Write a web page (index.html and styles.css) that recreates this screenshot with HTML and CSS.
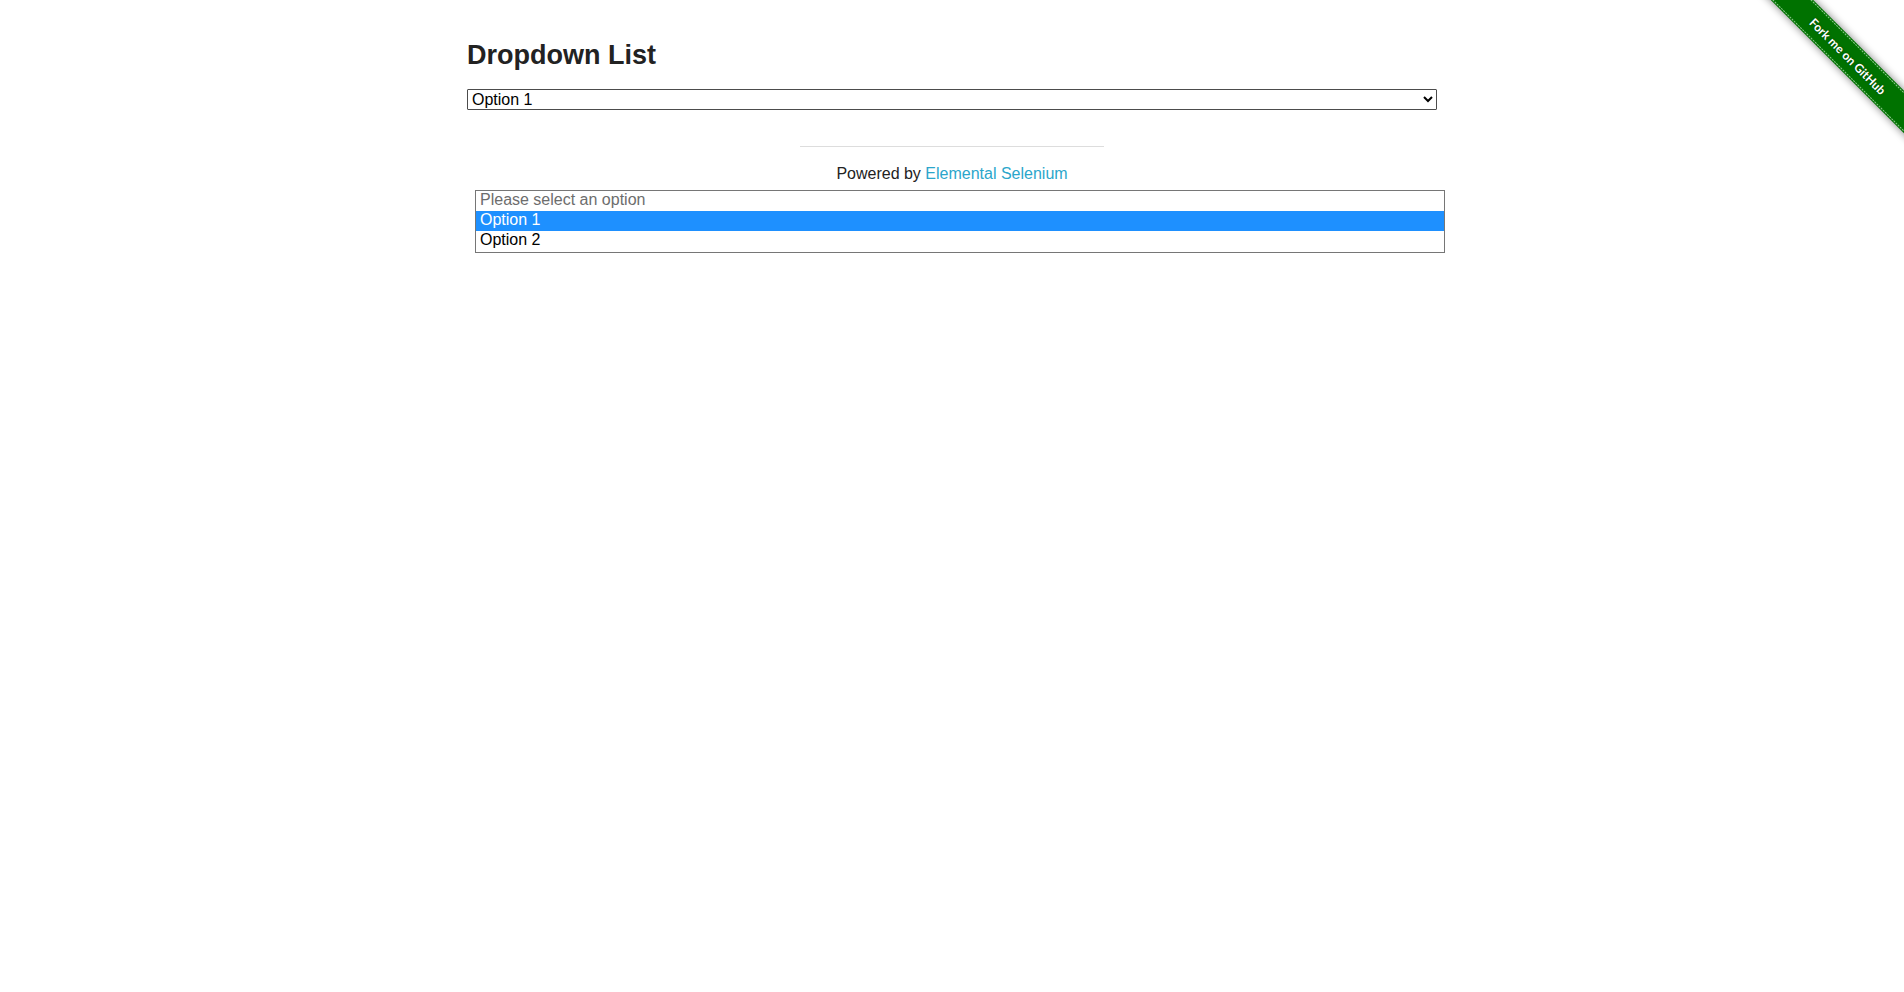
FILE: index.html
```html
<!DOCTYPE html>
<html lang="en">
<head>
<meta charset="utf-8">
<title>Dropdown List</title>
<link rel="stylesheet" href="styles.css">
</head>
<body>
<a class="ribbon" href="#" aria-label="Fork me on GitHub">
  <svg width="149" height="149" viewBox="0 0 149 149">
    <defs>
      <filter id="shadow" x="-20%" y="-50%" width="140%" height="200%"><feGaussianBlur stdDeviation="4"/></filter>
    </defs>
    <g transform="translate(93 56) rotate(45)">
      <rect class="ribbon-shadow" x="-120" y="-15" width="240" height="30" filter="url(#shadow)"/>
      <rect class="ribbon-band" x="-120" y="-15" width="240" height="30"/>
      <path class="ribbon-stitch" d="M-120 -13.5H120M-120 13.5H120"/>
      <text class="ribbon-text" x="0" y="5" text-anchor="middle">Fork me on GitHub</text>
    </g>
  </svg>
</a>
<main class="content">
  <h3 class="title"><label for="dropdown">Dropdown List</label></h3>
  <select id="dropdown" class="dropdown">
    <option disabled>Please select an option</option>
    <option selected>Option 1</option>
    <option>Option 2</option>
  </select>
</main>
<footer class="footer">
  <hr class="rule">
  <div class="powered">Powered by <a class="link" href="#">Elemental Selenium</a></div>
</footer>
<div class="popup">
  <select class="menu" size="3" aria-label="Dropdown options">
    <option disabled>Please select an option</option>
    <option selected>Option 1</option>
    <option>Option 2</option>
  </select>
</div>
</body>
</html>
```
FILE: styles.css
```css
* {
  box-sizing: border-box;
}

body {
  min-height: 100vh;
  margin: 0;
  background: #fff;
  color: #222;
  font: 16px/24px "Liberation Sans", Arial, sans-serif;
}

.ribbon {
  position: absolute;
  top: 0;
  right: 0;
  height: 149px;
  overflow: hidden;
}

.ribbon-shadow {
  fill: #000;
  opacity: 0.5;
}

.ribbon-band {
  fill: #007200;
}

.ribbon-stitch {
  fill: none;
  stroke: #8fc78f;
  stroke-width: 1;
  stroke-dasharray: 2 1;
}

.ribbon-text {
  fill: #fff;
  font: bold 12px Lato, sans-serif;
  text-shadow: 0 0 2px #003c00;
}

.content {
  max-width: 1000px;
  margin: 0 auto;
  padding: 36px 15px 0;
}

.title {
  margin: 0 0 15px;
  font-size: 27px;
  line-height: 38px;
}

.dropdown {
  display: block;
  width: 100%;
  height: 21px;
  padding: 0;
  border: 1px solid #4c4c4c;
  border-radius: 1px;
  background: #fff;
  color: #000;
  font: inherit;
  line-height: 19px;
}

.footer {
  max-width: 1000px;
  margin: 0 auto;
  padding: 36px 15px 0;
  text-align: center;
}

.rule {
  width: 304px;
  max-width: 100%;
  height: 1px;
  margin: 0 auto 15px;
  border: 0;
  background: #ddd;
}

.link {
  color: #2ba6cb;
  text-decoration: none;
}

.popup {
  max-width: 1000px;
  margin: 4px auto 0;
  padding: 0 7px 0 23px;
}

.menu {
  display: block;
  width: 100%;
  height: 63px;
  padding: 0;
  border: 1px solid #767676;
  border-radius: 0;
  outline: 0;
  background: #fff;
  color: #000;
  font: inherit;
  overflow: hidden;
}

.menu option {
  height: 20px;
  min-height: 20px;
  padding: 0 4px 2px;
  line-height: 18px;
}

.menu option:disabled {
  color: #6d6d6d;
}

.menu option:checked {
  background: #1e90ff linear-gradient(#1e90ff, #1e90ff);
  color: #fff;
  -webkit-text-fill-color: #fff;
}
```
